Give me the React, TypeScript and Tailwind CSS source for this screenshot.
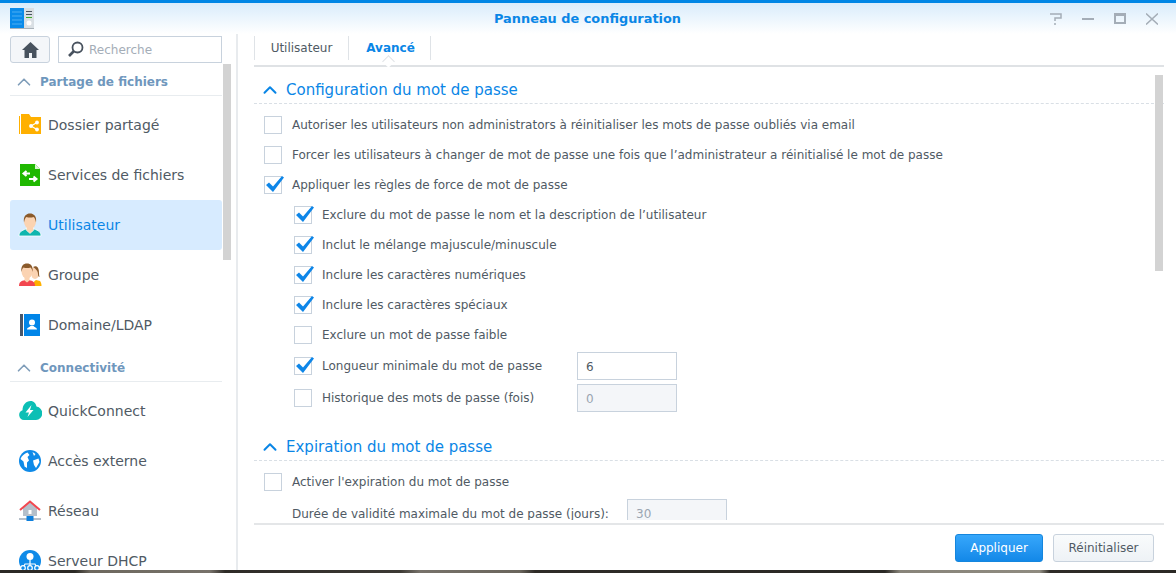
import { ReactNode } from "react";
import { ChevronUp } from "lucide-react";

const UserGlyph = () => (
  <svg width="24" height="24" viewBox="0 0 24 24">
    <path d="M1 23c0-4 2.500-5.500 7-7h8c4.500 1.500 7 3 7 7z" fill="#0fb5ae" stroke="#fff" strokeWidth="0.8" />
    <path d="M8.500 14h7v3.500l-3.500 3-3.500-3z" fill="#fbd3b2" stroke="#fff" strokeWidth="0.5" />
    <ellipse cx="12" cy="8.500" rx="6" ry="7.500" fill="#fbd3b2" />
    <path d="M6 9.500C5 3 8.500 .5 12 .5s7 2.500 6 9c-.6-3-1.200-4.500-2.500-5.500-2 .8-5 .8-7 0-1.300 1-1.900 2.500-2.500 5.500z" fill="#8a5a2b" />
  </svg>
);

const icons: Record<string, ReactNode> = {
  folder: (
    <svg width="24" height="24" viewBox="0 0 24 24">
      <path d="M1 3h1v18H1zM3 1h8l2 3h10v17H3z" fill="#ffb000" />
      <g fill="#fff" stroke="#fff" strokeWidth="1.200">
        <circle cx="13" cy="13" r="1.300" />
        <circle cx="19" cy="9.500" r="1.300" />
        <circle cx="19" cy="16.500" r="1.300" />
        <path d="M13 13l6-3.500M13 13l6 3.500" />
      </g>
    </svg>
  ),
  files: (
    <svg width="24" height="24" viewBox="0 0 24 24">
      <path d="M2 1h15l5 5v17H2z" fill="#1fb800" />
      <path d="M17 1l5 5h-5z" fill="#d8f5d0" />
      <path d="M12 10.500H6M8.500 8L5.500 10.500l3 2.500M11 16h7M15.500 13.500l3 2.500-3 2.500" stroke="#fff" strokeWidth="2" fill="none" />
    </svg>
  ),
  user: <UserGlyph />,
  group: (
    <svg width="24" height="24" viewBox="0 0 24 24">
      <path d="M15 23c0-3 1-5 3-6l4 1c1 1 1.500 3 1.500 5z" fill="#ffb000" />
      <ellipse cx="17" cy="10" rx="4" ry="6" fill="#fbd3b2" />
      <path d="M15 4c4-2 6 1 6 6 0 2 .5 4 .5 4-1 0-1.500-1-1.500-3 0-3-2-5-5-7z" fill="#8a5a2b" />
      <path d="M1 23c0-4 2-5 6-6h4c4 1 6 2 6 6z" fill="#f2474f" />
      <path d="M6.500 14h5v3.500l-2.500 2-2.500-2z" fill="#fbd3b2" />
      <ellipse cx="9" cy="8.500" rx="5.500" ry="7" fill="#fbd3b2" />
      <path d="M3.500 9C2.500 3 5.500 .5 9 .5s6.500 2.500 5.500 8.500c-.5-2.500-1-3.800-2-4.500-2 .7-5 .7-7 0-1 .7-1.500 2-2 4.500z" fill="#8a5a2b" />
    </svg>
  ),
  domain: (
    <svg width="24" height="24" viewBox="0 0 24 24">
      <rect x="2" y="1" width="3" height="22" fill="#48576a" />
      <rect x="6" y="1" width="16" height="22" fill="#0085e8" />
      <circle cx="14" cy="9.500" r="3" fill="#fff" />
      <path d="M9 16.500c0-2 3-2.500 3.500-3.500h3c.5 1 3.500 1.500 3.500 3.500z" fill="#fff" />
    </svg>
  ),
  quick: (
    <svg width="24" height="24" viewBox="0 0 24 24">
      <path d="M6 21a5 5 0 0 1-1.500-9.700C4.500 6 8 2 12.500 2c3.500 0 5.500 2.500 6 5.500a6.800 6.800 0 0 1-.5 13.500z" fill="#0cbfb5" />
      <path d="M13.500 6l-6 7.500h3.500l-1.500 4.500 6-7h-3.500z" fill="#fff" />
    </svg>
  ),
  globe: (
    <svg width="24" height="24" viewBox="0 0 24 24">
      <circle cx="12" cy="12" r="11" fill="#0e8ae8" />
      <path d="M2.500 10c1-3 4-5.500 7-6.500l2 2.500-2 2 1.500 3.500-2 2v5.500l-2.500-1.500-1-5zM14.500 3l3 2-1.500 2zM15 11.500l5.500-2 1 3.500-3.500 6-2-3z" fill="#fff" />
    </svg>
  ),
  network: (
    <svg width="24" height="24" viewBox="0 0 24 24">
      <path d="M5 9l7-6 7 6v8H5z" fill="#b5bfca" />
      <path d="M2 11l10-8.500L22 11" fill="none" stroke="#f2474f" strokeWidth="2" />
      <rect x="10.500" y="11" width="3" height="4" fill="#fff" />
      <rect x="1" y="19" width="22" height="2" fill="#b5bfca" />
      <rect x="8.500" y="17" width="7" height="5" fill="#0e7fdc" />
    </svg>
  ),
  dhcp: (
    <svg width="24" height="24" viewBox="0 0 24 24">
      <circle cx="12" cy="12" r="11" fill="#0e8ae8" />
      <circle cx="12" cy="7.500" r="3.500" fill="#fff" />
      <path d="M12 9v7M5 19l2-4h10l2 4" stroke="#fff" strokeWidth="1.200" fill="none" />
      <g fill="#0e8ae8" stroke="#fff" strokeWidth="1.200">
        <circle cx="5" cy="19" r="2.300" />
        <circle cx="12" cy="19" r="2.300" />
        <circle cx="19" cy="19" r="2.300" />
      </g>
    </svg>
  ),
};

function SideHeader({ label }: { label: string }) {
  return (
    <div className="mb-1 flex h-8 items-center gap-[5px] border-b border-[#e8ecef] pl-[3px] pt-1">
      <ChevronUp className="h-[22px] w-[22px] text-[#7f9db9]" strokeWidth={1.800} />
      <span className="text-[12px] font-bold text-[#6f97bd]">{label}</span>
    </div>
  );
}

function SideItem({ icon, label, active }: { icon: string; label: string; active?: boolean }) {
  return (
    <div
      className={`flex h-[50px] shrink-0 items-center gap-[6px] rounded-[3px] pl-[8px] text-[14px] ${
        active ? "bg-[#d7ebff] text-[#0a86e6]" : "text-[#505a64]"
      }`}
    >
      <span className="block h-6 w-6">{icons[icon]}</span>
      {label}
    </div>
  );
}

function Check({ on }: { on?: boolean }) {
  return (
    <span className="relative block h-[18px] w-[18px] shrink-0 border border-[#c8d2dd] bg-white">
      {on && (
        <svg className="absolute -top-[4px] left-0 h-[22px] w-[20px]" viewBox="0 0 20 22">
          <path d="M1 12l3-2.500 4 4L17 3l2 1.500L8 19z" fill="#0e86e8" />
        </svg>
      )}
    </span>
  );
}

function Row({ on, label, sub }: { on?: boolean; label: string; sub?: boolean }) {
  return (
    <div className={`flex h-[30px] items-center gap-[10px] ${sub ? "pl-10" : "pl-[10px]"}`}>
      <Check on={on} />
      <span>{label}</span>
    </div>
  );
}

function Field({ value, off }: { value: string; off?: boolean }) {
  return (
    <div
      className={`flex h-7 w-[100px] shrink-0 items-center border border-[#c8d2dd] pl-[8px] pt-[1px] ${
        off ? "bg-[#f4f6f9] text-[#9aa5b1]" : "bg-white text-[#505a64]"
      }`}
    >
      {value}
    </div>
  );
}

function SectionTitle({ label }: { label: string }) {
  return (
    <div className="flex h-[29px] items-center gap-[5px] border-b border-dashed border-[#d9dfe5] pl-[5px] pt-[2px]">
      <ChevronUp className="h-[22px] w-[22px] text-[#0a86e6]" strokeWidth={2.200} />
      <span className="text-[15px] text-[#0a86e6]">{label}</span>
    </div>
  );
}

export default function App() {
  return (
    <div className="flex h-[573px] w-[1176px] flex-col overflow-hidden bg-white font-['DejaVu_Sans',sans-serif] text-[12px] text-[#505a64]">
      <div className="h-[3px] shrink-0 bg-[#0086e5]" />

      {/* Title bar */}
      <div className="relative flex h-[31px] shrink-0 items-center bg-gradient-to-b from-[#d9ecfb] to-white">
        <svg className="ml-[10px]" width="24" height="21" viewBox="0 0 24 21">
          <rect width="14" height="20" fill="#0a8bea" />
          <rect x="14" width="10" height="20" fill="#d9dfe4" />
          <path d="M16 3h6v1h-6zM16 6h6v1h-6z" fill="#4a5560" />
          <rect x="16" y="9" width="6" height="1" fill="#3fae2a" />
          <circle cx="19" cy="15" r="2.500" fill="#fff" />
          <path d="M2 4h10M2 8h10M2 12h10M2 16h10" stroke="#5db7f5" strokeWidth="0.800" />
          <rect y="20" width="24" height="1" fill="#a9b2ba" />
        </svg>
        <span className="absolute inset-x-0 pr-[1px] text-center text-[12.900px] font-bold text-[#0a86e6]">Panneau de configuration</span>
        <div className="ml-auto mr-[18px] flex items-center gap-[20px] text-[#a4adb7]">
          <svg width="12" height="12" viewBox="0 0 12 12" fill="none" stroke="currentColor" strokeWidth="1.500">
            <path d="M0 1h11v4H5v3M5 10v2" />
          </svg>
          <svg width="12" height="12" viewBox="0 0 12 12"><rect y="5" width="12" height="2" fill="currentColor" /></svg>
          <svg width="12" height="12" viewBox="0 0 12 12" fill="none" stroke="currentColor" strokeWidth="2">
            <path d="M1 2h10v8H1z" />
            <path d="M0 1h12" />
          </svg>
          <svg width="12" height="12" viewBox="0 0 12 12" stroke="currentColor" strokeWidth="1.500">
            <path d="M0 .5l12 11M12 .5L0 11.500" />
          </svg>
        </div>
      </div>

      <div className="flex min-h-0 flex-1">
        {/* Sidebar */}
        <aside className="relative w-[238px] shrink-0 overflow-hidden border-r-2 border-[#e8ebee] pl-[10px]">
          <div className="w-[212px]">
            <div className="mt-[2px] mb-[1px] flex h-[27px] gap-2">
              <div className="flex w-10 items-center justify-center rounded-[3px] border border-[#c8d2dd] bg-[#f4f6f9]">
                <svg width="17" height="16" viewBox="0 0 17 16" fill="#48525e">
                  <path d="M8.500 0L0 8h2.500v8h4.500v-5h3v5h4.500V8H17z" />
                </svg>
              </div>
              <div className="flex min-w-0 flex-1 items-center gap-[5px] border border-[#c8d2dd] pl-2 text-[#a4adb7]">
                <svg width="17" height="17" viewBox="0 0 17 17" fill="none" stroke="#48525e">
                  <circle cx="10.500" cy="6.500" r="5" strokeWidth="1.800" />
                  <path d="M7 10l-5 5" strokeWidth="2.600" />
                </svg>
                Recherche
              </div>
            </div>
            <SideHeader label="Partage de fichiers" />
            <SideItem icon="folder" label="Dossier partagé" />
            <SideItem icon="files" label="Services de fichiers" />
            <SideItem icon="user" label="Utilisateur" active />
            <SideItem icon="group" label="Groupe" />
            <SideItem icon="domain" label="Domaine/LDAP" />
            <SideHeader label="Connectivité" />
            <SideItem icon="quick" label="QuickConnect" />
            <SideItem icon="globe" label="Accès externe" />
            <SideItem icon="network" label="Réseau" />
            <SideItem icon="dhcp" label="Serveur DHCP" />
          </div>
          <div className="absolute left-[223px] top-[30px] h-[196px] w-2 bg-[#d3d3d3]" />
        </aside>

        {/* Main panel */}
        <main className="flex min-w-0 flex-1 flex-col pl-[16px] pr-[12px]">
          <div className="relative flex h-[33px] shrink-0 items-start border-b-2 border-[#dfe2e5] pt-[2px]">
            <div className="flex h-6 w-[95px] items-center justify-center border-x border-[#dfe3e7]">Utilisateur</div>
            <div className="flex h-6 w-[82px] items-center justify-center border-r border-[#dfe3e7] pl-[2px] font-bold text-[#0a86e6]">Avancé</div>
            <span className="absolute -bottom-[2px] left-[130px] h-[9px] w-[9px] translate-y-[-1px] rotate-45 border-l border-t border-[#dfe2e5] bg-white" />
          </div>

          <div className="relative min-h-0 flex-1 overflow-hidden border-b-2 border-[#e4e6e8] pt-2">
            <SectionTitle label="Configuration du mot de passe" />
            <div className="pt-[6px]">
              <Row label="Autoriser les utilisateurs non administrators à réinitialiser les mots de passe oubliés via email" />
              <Row label="Forcer les utilisateurs à changer de mot de passe une fois que l’administrateur a réinitialisé le mot de passe" />
              <Row on label="Appliquer les règles de force de mot de passe" />
              <Row sub on label="Exclure du mot de passe le nom et la description de l’utilisateur" />
              <Row sub on label="Inclut le mélange majuscule/minuscule" />
              <Row sub on label="Inclure les caractères numériques" />
              <Row sub on label="Inclure les caractères spéciaux" />
              <Row sub label="Exclure un mot de passe faible" />
              <div className="flex h-8 items-center pl-10">
                <Check on />
                <span className="ml-[10px] w-[255px] pb-[1px]">Longueur minimale du mot de passe</span>
                <Field value="6" />
              </div>
              <div className="flex h-8 items-center pl-10">
                <Check />
                <span className="ml-[10px] w-[255px] pb-[1px]">Historique des mots de passe (fois)</span>
                <Field value="0" off />
              </div>
            </div>
            <div className="mt-[18px]">
              <SectionTitle label="Expiration du mot de passe" />
            </div>
            <div className="pt-[6px]">
              <Row label="Activer l'expiration du mot de passe" />
              <div className="flex h-7 items-center pl-[38px] pt-[4px]">
                <span className="w-[335px] pt-[1px]">Durée de validité maximale du mot de passe (jours):</span>
                <Field value="30" off />
              </div>
            </div>
            <div className="absolute left-[901px] top-[8px] h-[196px] w-2 bg-[#d3d3d3]" />
            <div className="absolute inset-x-0 bottom-0 h-[3px] bg-white" />
          </div>

          <div className="flex h-[45px] shrink-0 items-center justify-end gap-[10px] pr-[10px]">
            <button className="h-[28px] w-[88px] rounded-[3px] border border-[#1586dd] bg-gradient-to-b from-[#36a7fb] to-[#1288e8] text-white">
              Appliquer
            </button>
            <button className="h-[28px] w-[101px] rounded-[3px] border border-[#c8d2dd] bg-gradient-to-b from-[#f9fbfc] to-[#eef2f6] text-[#505a64]">
              Réinitialiser
            </button>
          </div>
        </main>
      </div>

      <div className="h-[3px] shrink-0 bg-[linear-gradient(90deg,#2b2925_0,#2b2925_75px,#6d685e_90px,#77726a_210px,#2e2b27_225px,#3c3934_400px,#77726a_420px,#6a655c_520px,#2e2b27_535px,#2b2925_885px,#88847a_900px,#8f8b80_1040px,#2e2b27_1050px,#2b2925_1176px)]" />
    </div>
  );
}
